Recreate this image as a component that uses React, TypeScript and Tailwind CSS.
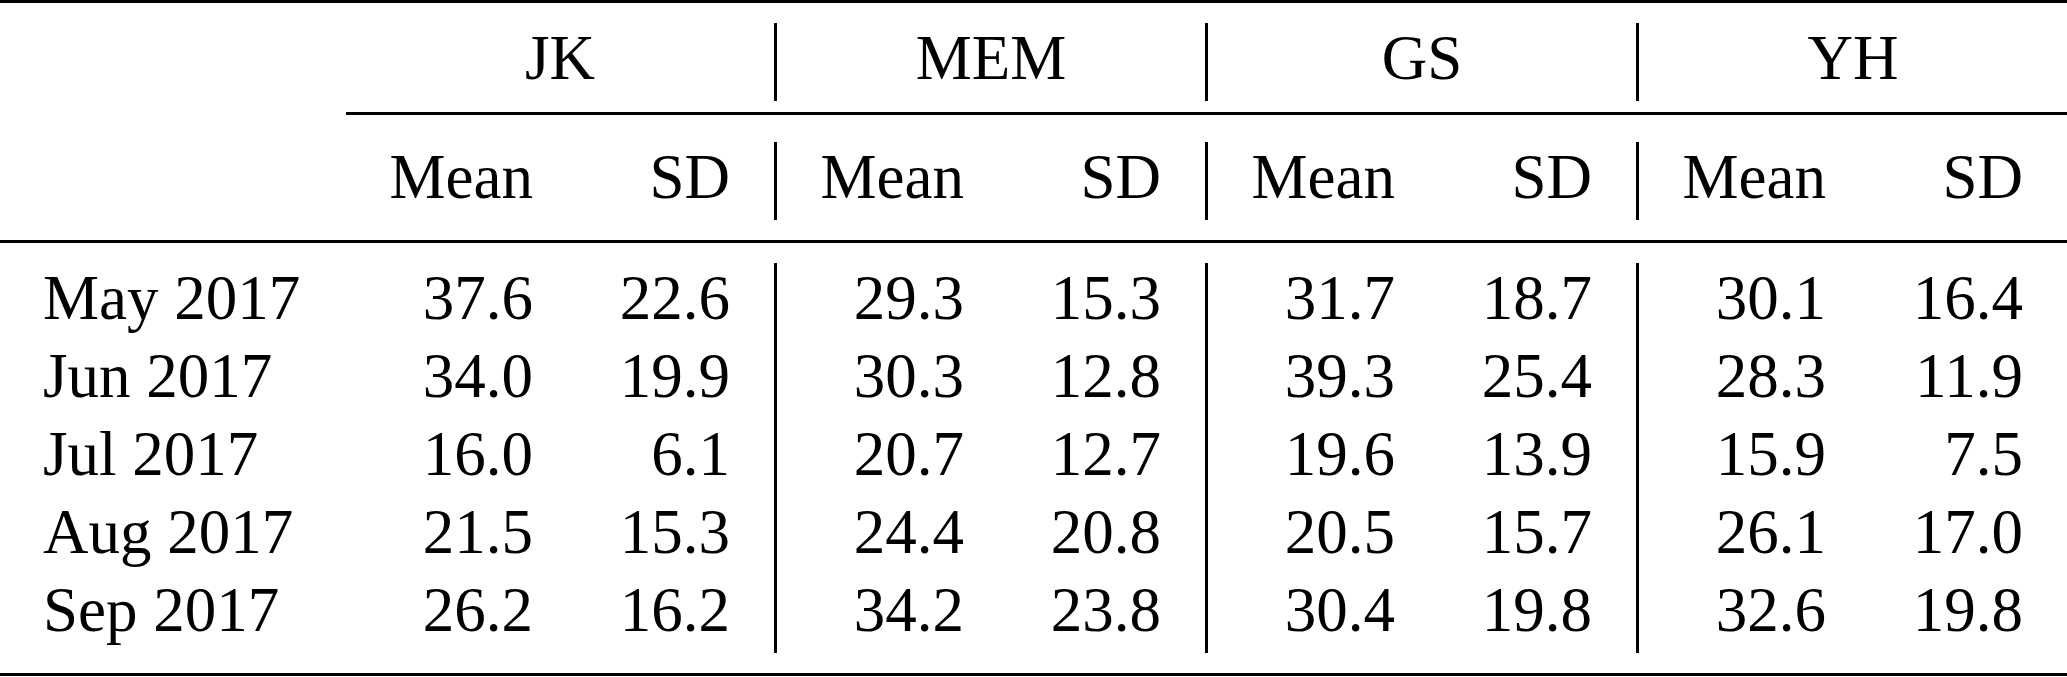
import React from 'react';

type Row = { month: string; values: [string, string][] };

const groups = ['JK', 'MEM', 'GS', 'YH'];

const rows: Row[] = [
  { month: 'May 2017', values: [['37.6', '22.6'], ['29.3', '15.3'], ['31.7', '18.7'], ['30.1', '16.4']] },
  { month: 'Jun 2017', values: [['34.0', '19.9'], ['30.3', '12.8'], ['39.3', '25.4'], ['28.3', '11.9']] },
  { month: 'Jul 2017', values: [['16.0', '6.1'], ['20.7', '12.7'], ['19.6', '13.9'], ['15.9', '7.5']] },
  { month: 'Aug 2017', values: [['21.5', '15.3'], ['24.4', '20.8'], ['20.5', '15.7'], ['26.1', '17.0']] },
  { month: 'Sep 2017', values: [['26.2', '16.2'], ['34.2', '23.8'], ['30.4', '19.8'], ['32.6', '19.8']] },
];

const gridCols = 'grid grid-cols-[346px_428px_3px_428px_3px_428px_3px_428px]';

const Rule: React.FC = () => <div className="h-[3px] w-full bg-black" />;

const VLine: React.FC = () => <div className="w-[3px] self-stretch bg-black" />;

export default function App() {
  return (
    <div className="w-[2067px] h-[677px] bg-white text-black font-['Liberation_Serif',serif] text-[63px] leading-[70px]">
      <Rule />

      {/* Group header */}
      <div className={`${gridCols} pt-[20px] pb-[11px]`}>
        <div />
        {groups.map((g, i) => (
          <React.Fragment key={g}>
            {i > 0 && <VLine />}
            <div className="h-[78px] text-center">{g}</div>
          </React.Fragment>
        ))}
      </div>

      {/* cmidrule */}
      <div className="flex h-[3px]">
        <div className="w-[346px]" />
        <div className="flex-1 bg-black" />
      </div>

      {/* Sub header */}
      <div className={`${gridCols} pt-[27px] pb-[20px]`}>
        <div />
        {groups.map((g, i) => (
          <React.Fragment key={g}>
            {i > 0 && <VLine />}
            <div className="h-[78px] flex pl-[43px] pr-[44px]">
              <span className="w-[144px] text-right">Mean</span>
              <span className="flex-1 text-right">SD</span>
            </div>
          </React.Fragment>
        ))}
      </div>

      <Rule />

      {/* Body */}
      <div className={`${gridCols} py-[20px]`}>
        <div className="flex flex-col pl-[43px]">
          {rows.map((r) => (
            <div key={r.month} className="h-[78px] whitespace-nowrap">
              {r.month}
            </div>
          ))}
        </div>
        {groups.map((g, i) => (
          <React.Fragment key={g}>
            {i > 0 && <VLine />}
            <div className="flex flex-col pl-[43px] pr-[44px]">
              {rows.map((r) => (
                <div key={r.month} className="h-[78px] flex">
                  <span className="w-[144px] text-right">{r.values[i][0]}</span>
                  <span className="flex-1 text-right">{r.values[i][1]}</span>
                </div>
              ))}
            </div>
          </React.Fragment>
        ))}
      </div>

      <Rule />
    </div>
  );
}
